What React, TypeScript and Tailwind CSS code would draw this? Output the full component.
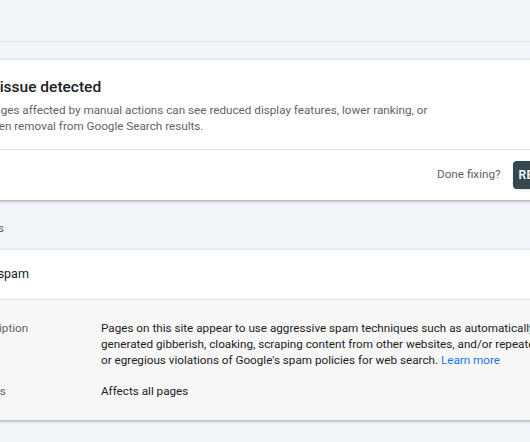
import React from 'react';

const DESCRIPTION =
  "Pages on this site appear to use aggressive spam techniques such as automatically generated gibberish, cloaking, scraping content from other websites, and/or repeated or egregious violations of Google's spam policies for web search.";

export default function App() {
  return (
    <div className="w-[530px] h-[442px] overflow-hidden bg-[#f1f4f8] font-['Roboto',sans-serif]">
      <div className="ml-[-60px] w-[1000px]">
        {/* top strip */}
        <div className="h-[41px]" />
        <div className="h-px bg-[#e2e6ea]" />
        <div className="h-[18px]" />

        {/* summary card */}
        <div className="bg-white shadow-[0_1px_2px_rgba(60,64,67,0.3),0_1px_3px_1px_rgba(60,64,67,0.15)]">
          <div className="pl-[47px] pr-6 pt-[16px] pb-[15px]">
            <h2 className="text-[15.5px] leading-[22px] font-medium text-[#202124]">1 issue detected</h2>
            <p className="mt-[4px] w-[455px] text-[11.7px] leading-[16px] text-[#5f6368]">
              Pages affected by manual actions can see reduced display features, lower ranking, or even removal from Google Search results.
            </p>
          </div>
          <div className="h-px bg-[#e0e0e0]" />
          <div className="flex items-center h-[50px] pl-[497px] gap-[12px]">
            <span className="text-[11.7px] text-[#5f6368]">Done fixing?</span>
            <button className="h-[28px] px-[6px] rounded bg-[#37474f] text-white text-[12px] font-semibold tracking-wide shadow">
              REQUEST REVIEW
            </button>
          </div>
        </div>

        {/* issues header */}
        <div className="h-[50px] pl-[30px] pt-[20px] text-[11.7px] leading-4 text-[#5f6368]">Issues</div>

        {/* issues card */}
        <div className="bg-white shadow-[0_1px_2px_rgba(60,64,67,0.3),0_1px_3px_1px_rgba(60,64,67,0.15)]">
          <div className="h-[50px] flex items-center pl-[29px] text-[12.5px] text-[#202124] border-b border-[#e0e0e0]">
            Pure spam
          </div>
          <div className="bg-[#f8f8f8] pl-[29px] pt-[20px] pb-[21px] text-[11.7px] leading-[16px]">
            <div className="flex">
              <div className="w-[132px] shrink-0 text-[#5f6368]">Description</div>
              <div className="w-[444px] text-[#202124]">
                {DESCRIPTION} <span className="text-[#1a73e8]">Learn more</span>
              </div>
            </div>
            <div className="flex mt-[15px]">
              <div className="w-[132px] shrink-0 text-[#5f6368]">Effects</div>
              <div className="text-[#202124]">Affects all pages</div>
            </div>
          </div>
        </div>
      </div>
    </div>
  );
}
